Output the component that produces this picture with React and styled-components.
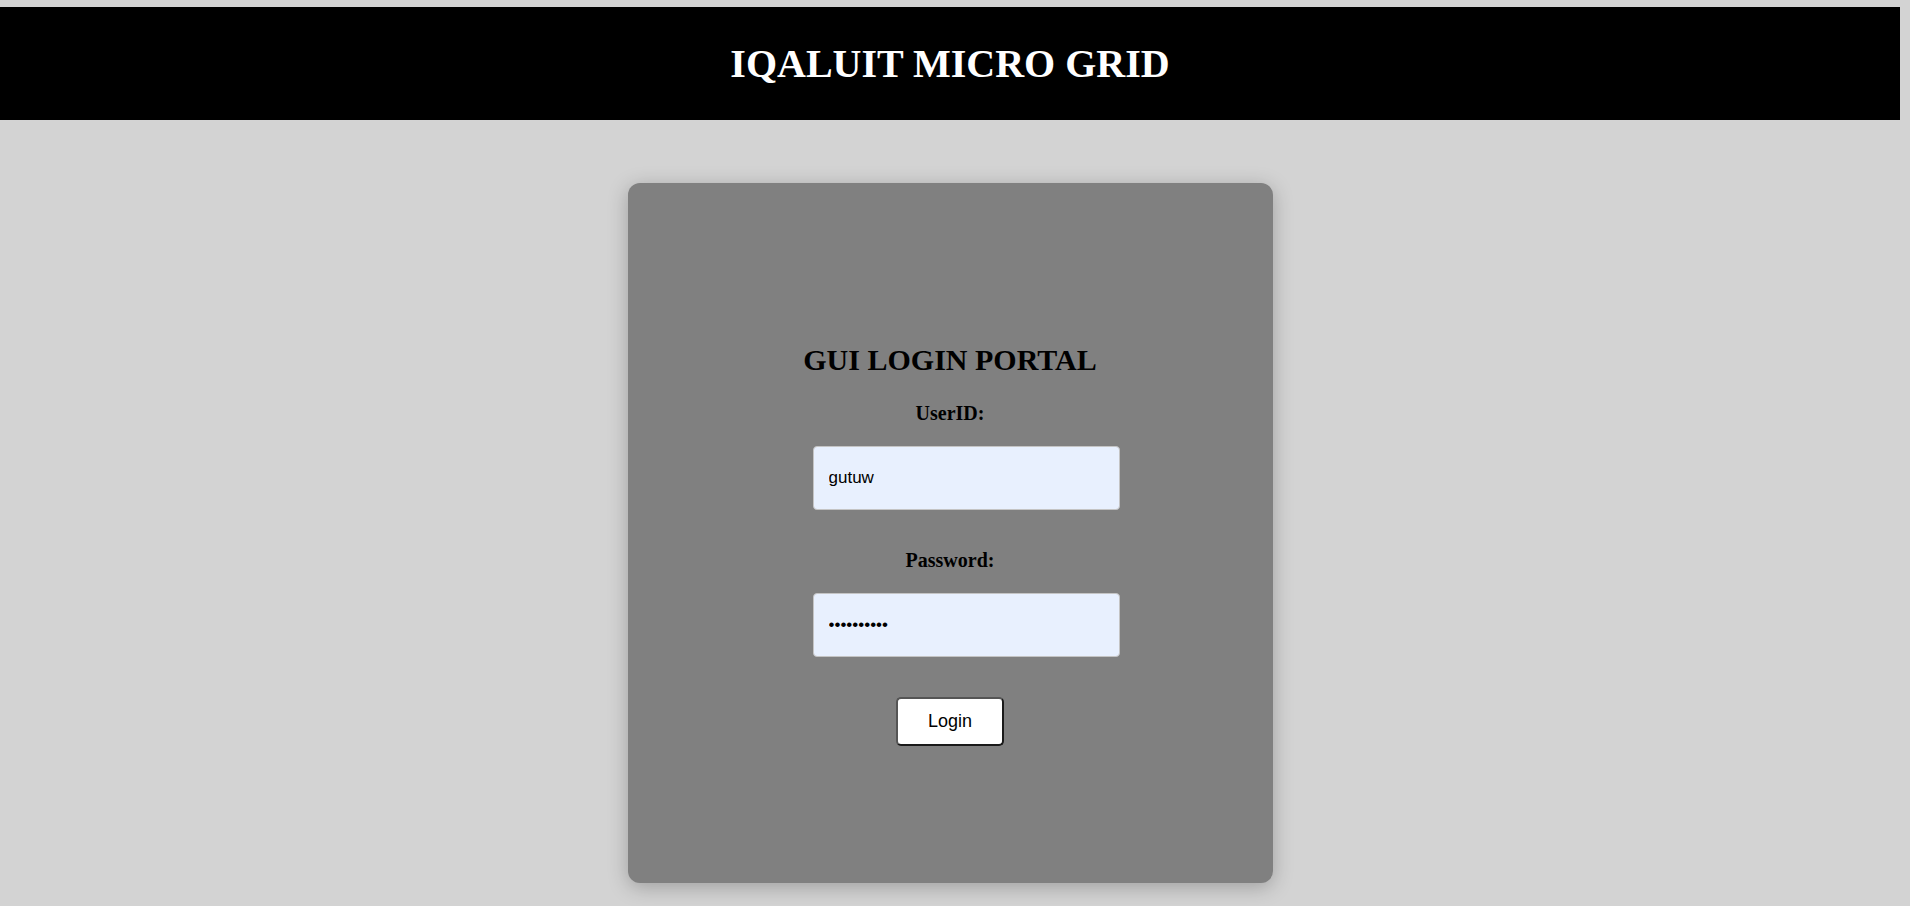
import React from "react";
import styled, { createGlobalStyle } from "styled-components";

const GlobalStyle = createGlobalStyle`
  html, body {
    margin: 0;
    padding: 0;
    background: #d3d3d3;
    font-family: "Liberation Serif", "Times New Roman", serif;
  }
  body {
    padding-top: 7px;
  }
`;

const Header = styled.header`
  width: 1900px;
  height: 113px;
  background: #000;
  display: flex;
  align-items: center;
  justify-content: center;
`;

const SiteTitle = styled.h1`
  margin: 0;
  color: #fff;
  font-size: 40px;
  font-weight: bold;
  font-family: "Liberation Serif", "Times New Roman", serif;
`;

const Main = styled.main`
  width: 1900px;
  display: flex;
  justify-content: center;
  padding: 63px 0 30px;
`;

const Card = styled.div`
  width: 645px;
  height: 700px;
  box-sizing: border-box;
  background: #808080;
  border-radius: 12px;
  box-shadow: 0 4px 20px rgba(0, 0, 0, 0.25);
  padding-top: 160px;
  display: flex;
  flex-direction: column;
  align-items: center;
`;

const PortalTitle = styled.h2`
  margin: 0 0 25px;
  font-size: 30px;
  font-weight: bold;
  color: #000;
`;

const Form = styled.form`
  width: 275px;
  display: flex;
  flex-direction: column;
  align-items: center;
`;

const Field = styled.div`
  width: 100%;
  display: flex;
  flex-direction: column;
  align-items: center;
  margin-bottom: ${(p) => p.$gap}px;
`;

const Label = styled.label`
  font-size: 20px;
  font-weight: bold;
  color: #000;
  margin-bottom: 21px;
`;

const Input = styled.input`
  align-self: flex-start;
  width: 100%;
  box-sizing: content-box;
  height: 20px;
  padding: 21px 15px;
  border: 1px solid #c4c4c4;
  border-radius: 4px;
  background: #e8f0fe;
  font-family: "Liberation Sans", Arial, sans-serif;
  font-size: 17px;
  color: #000;
  outline: none;
`;

const Button = styled.button`
  width: 108px;
  height: 49px;
  background: #fff;
  border: 2px solid #1a1a1a;
  border-top-color: #555;
  border-left-color: #555;
  border-radius: 5px;
  font-family: "Liberation Sans", Arial, sans-serif;
  font-size: 18px;
  color: #000;
  cursor: pointer;
`;

export default function App() {
  return (
    <>
      <GlobalStyle />
      <Header>
        <SiteTitle>IQALUIT MICRO GRID</SiteTitle>
      </Header>
      <Main>
        <Card>
          <PortalTitle>GUI LOGIN PORTAL</PortalTitle>
          <Form onSubmit={(e) => e.preventDefault()}>
            <Field $gap={39}>
              <Label htmlFor="userid">UserID:</Label>
              <Input id="userid" type="text" defaultValue="gutuw" />
            </Field>
            <Field $gap={40}>
              <Label htmlFor="password">Password:</Label>
              <Input id="password" type="password" defaultValue="abcdefghij" />
            </Field>
            <Button type="submit">Login</Button>
          </Form>
        </Card>
      </Main>
    </>
  );
}
